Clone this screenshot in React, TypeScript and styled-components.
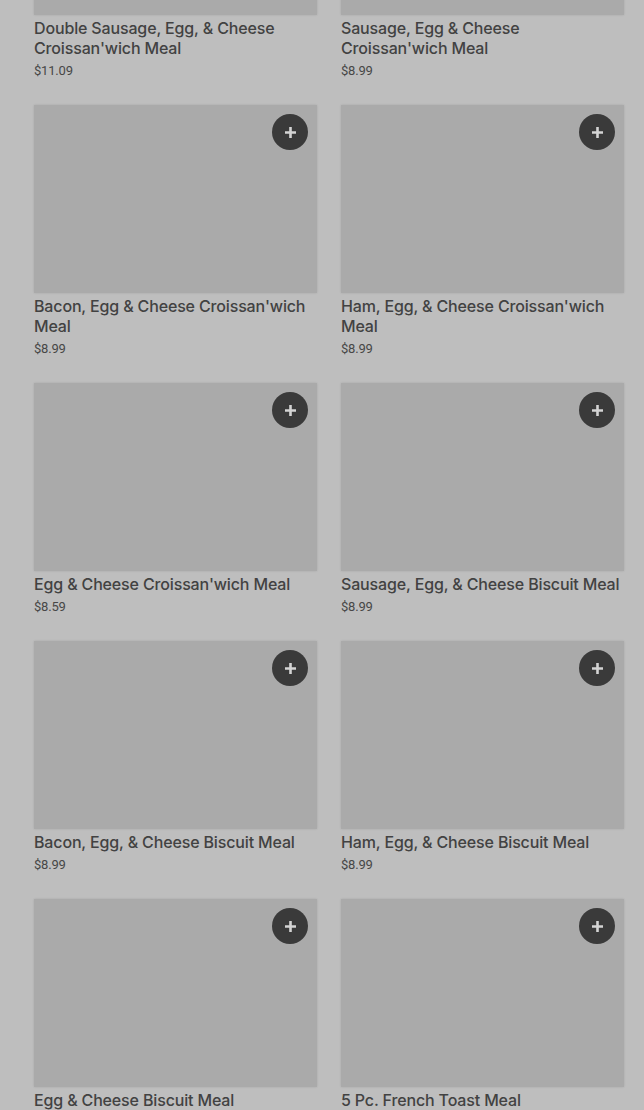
import React from "react";
import styled, { createGlobalStyle } from "styled-components";

const Global = createGlobalStyle`
  html, body { margin: 0; padding: 0; background: #bebebe; }
  body { font-family: Inter, Roboto, "Noto Sans", Arial, sans-serif; overflow: hidden; }
`;

const Page = styled.div`
  width: 644px;
  height: 1110px;
  overflow: hidden;
  background: #bebebe;
`;

const Grid = styled.div`
  display: grid;
  grid-template-columns: 283px 283px;
  column-gap: 24px;
  row-gap: 24px;
  padding-left: 34px;
  margin-top: -173px;
`;

const Card = styled.div`
  display: flex;
  flex-direction: column;
`;

const Thumb = styled.div`
  position: relative;
  height: 188px;
  background: #aaaaaa;
  box-shadow: 0 0 2px rgba(0, 0, 0, 0.12);
`;

const AddButton = styled.button`
  position: absolute;
  top: 9px;
  right: 9px;
  width: 36px;
  height: 36px;
  border-radius: 50%;
  border: none;
  padding: 0;
  background: #3a3a3a;
  display: flex;
  align-items: center;
  justify-content: center;
  cursor: pointer;
`;

const Title = styled.div`
  margin-top: 3px;
  font-family: Inter, Roboto, sans-serif;
  font-size: 16px;
  line-height: 20px;
  font-weight: 500;
  letter-spacing: -0.15px;
  color: #424242;
`;

const Price = styled.div`
  margin-top: 3px;
  font-family: Roboto, sans-serif;
  font-size: 13px;
  line-height: 20px;
  color: #474747;
  letter-spacing: -0.2px;
`;

const Plus = () => (
  <svg width="13" height="13" viewBox="0 0 13 13">
    <path d="M6.5 1v11M1 6.5h11" stroke="#d4d4d4" strokeWidth="2.6" />
  </svg>
);

const items = [
  { name: "Double Sausage, Egg, & Cheese Croissan'wich Meal", price: "$11.09" },
  { name: "Sausage, Egg & Cheese Croissan'wich Meal", price: "$8.99" },
  { name: "Bacon, Egg & Cheese Croissan'wich Meal", price: "$8.99" },
  { name: "Ham, Egg, & Cheese Croissan'wich Meal", price: "$8.99" },
  { name: "Egg & Cheese Croissan'wich Meal", price: "$8.59" },
  { name: "Sausage, Egg, & Cheese Biscuit Meal", price: "$8.99" },
  { name: "Bacon, Egg, & Cheese Biscuit Meal", price: "$8.99" },
  { name: "Ham, Egg, & Cheese Biscuit Meal", price: "$8.99" },
  { name: "Egg & Cheese Biscuit Meal", price: "$8.59" },
  { name: "5 Pc. French Toast Meal", price: "$6.99" },
];

export default function App() {
  return (
    <Page>
      <Global />
      <Grid>
        {items.map((it) => (
          <Card key={it.name}>
            <Thumb>
              <AddButton aria-label="Add">
                <Plus />
              </AddButton>
            </Thumb>
            <Title>{it.name}</Title>
            <Price>{it.price}</Price>
          </Card>
        ))}
      </Grid>
    </Page>
  );
}
